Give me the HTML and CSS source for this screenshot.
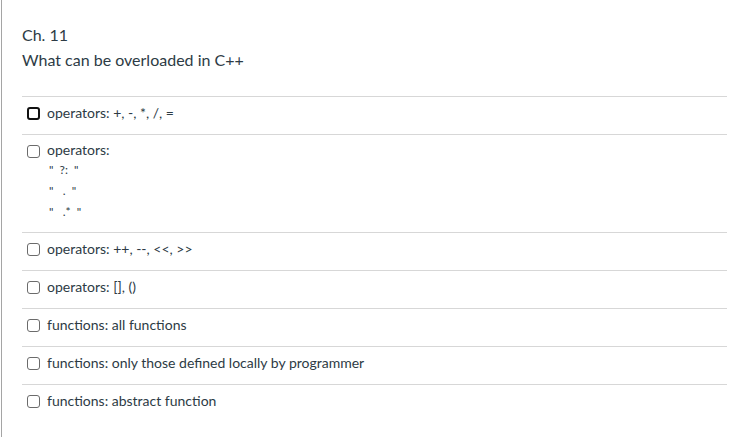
FILE: index.html
```html
<!DOCTYPE html>
<html>
<head>
<meta charset="utf-8">
<link rel="stylesheet" href="styles.css">
</head>
<body>
<div class="frame">
  <div class="question">
    <div class="header">
      <div class="chapter">Ch. 11</div>
      <div class="prompt">What can be overloaded in C++</div>
    </div>
    <div class="answers">
      <label class="answer"><span class="box focused"></span><span class="text">operators: +, -, *, /, =</span></label>
      <label class="answer multi"><span class="box"></span><span class="text"><span class="lead">operators:</span><span class="sub">"  ?:  "</span><span class="sub">"   .  "</span><span class="sub">"   .*  "</span></span></label>
      <label class="answer"><span class="box"></span><span class="text">operators: ++, --, &lt;&lt;, &gt;&gt;</span></label>
      <label class="answer"><span class="box"></span><span class="text">operators: [], ()</span></label>
      <label class="answer"><span class="box"></span><span class="text">functions: all functions</span></label>
      <label class="answer"><span class="box"></span><span class="text">functions: only those defined locally by programmer</span></label>
      <label class="answer"><span class="box"></span><span class="text">functions: abstract function</span></label>
    </div>
  </div>
</div>
</body>
</html>
```

FILE: styles.css
```css
html, body {
  margin: 0;
  padding: 0;
  background: #fff;
}
body {
  font-family: Lato, "Liberation Sans", sans-serif;
  color: #2d3b45;
}
.frame {
  margin-left: 1px;
  border-left: 1px solid #a5a5a5;
  height: 437px;
  box-sizing: border-box;
}
.question {
  padding: 23px 19px 0 20px;
}
.header {
  padding-bottom: 24px;
  border-bottom: 1px solid #d7d7d7;
}
.chapter {
  font-size: 16px;
  line-height: 24px;
}
.prompt {
  font-size: 16px;
  line-height: 25px;
}
.answers {
  display: flex;
  flex-direction: column;
}
.answer {
  display: flex;
  align-items: flex-start;
  gap: 7px;
  padding: 6px 0 11px 5px;
  border-bottom: 1px solid #d7d7d7;
  font-size: 14px;
  line-height: 20px;
}
.answer:last-child {
  border-bottom: none;
}
.box {
  flex: none;
  width: 13px;
  height: 13px;
  margin-top: 4px;
  box-sizing: border-box;
  border: 1px solid #6b6b6b;
  border-radius: 3px;
  background: #fff;
}
.box.focused {
  border: 2.5px solid #111;
}
.text {
  display: flex;
  flex-direction: column;
}
.multi {
  padding-bottom: 10px;
}
.lead {
  line-height: 18px;
}
.sub {
  font-size: 12px;
  line-height: 21px;
  padding-left: 2px;
  white-space: pre;
}
```
